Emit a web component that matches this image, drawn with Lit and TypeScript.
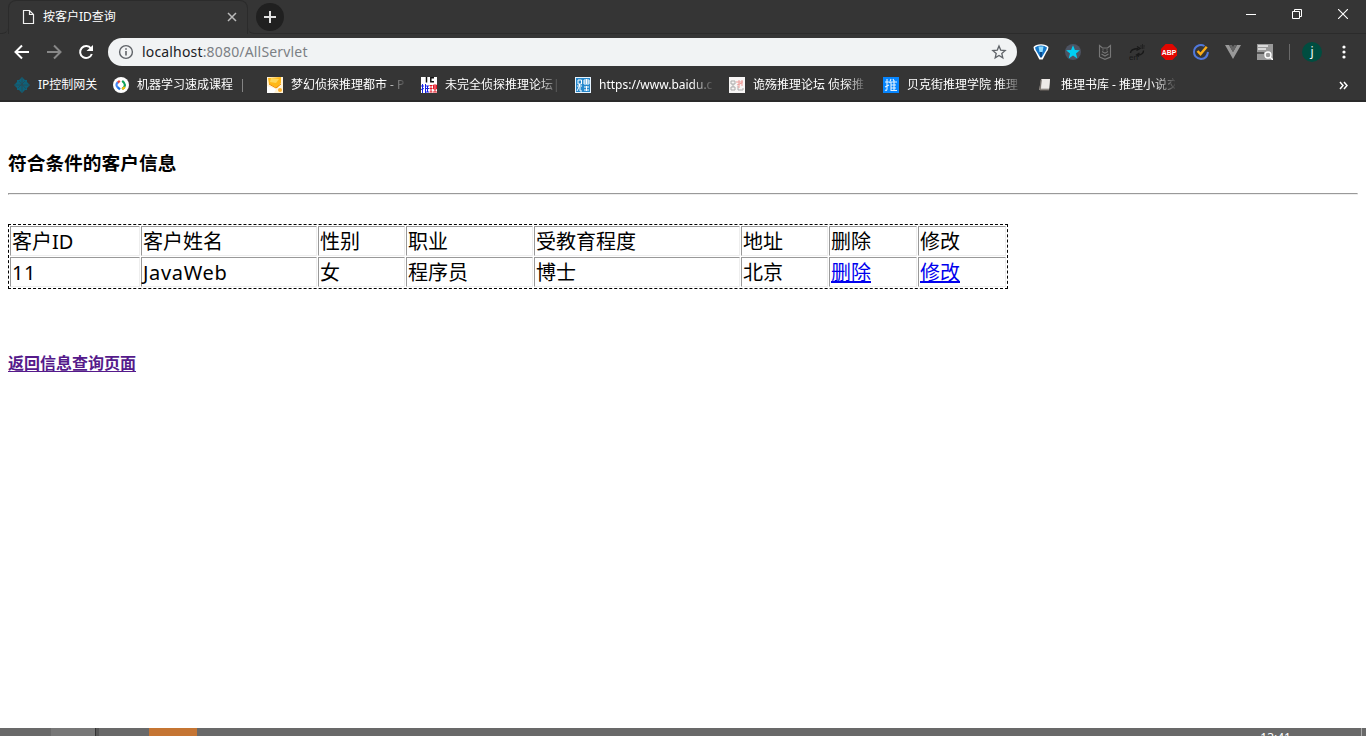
import { LitElement, html, css, svg } from "lit";
import { customElement, property } from "lit/decorators.js";

const base = css`
  :host {
    display: block;
    font-family: "Noto Sans", "Noto Sans CJK SC", sans-serif;
  }
  * { box-sizing: border-box; }
  svg { display: block; flex: none; }
`;

const glyph = (size: number, body: unknown) =>
  html`<svg width=${size} height=${size} viewBox="0 0 ${size} ${size}">${body}</svg>`;

const bookmarks = [
  {
    label: "IP控制网关", width: 83,
    icon: svg`<path d="M8 0l3 3h2v2l3 3-3 3v2h-2l-3 3-3-3H3v-2L0 8l3-3V3h2z" fill="#0d627b"/><path d="M8 1v14M1 8h14M5 4l7 8M4 11l7-7" stroke="#2b4953" stroke-width=".8"/>`,
  },
  {
    label: "机器学习速成课程  |  ", width: 138,
    icon: svg`<circle cx="8" cy="8" r="8" fill="#fff"/><g fill="none" stroke-width="2.2"><path d="M6.8 3.8L4.3 5.8" stroke="#ea4335"/><path d="M4.8 5.2Q2 8 5 10.8" stroke="#4285f4"/><path d="M4.8 10.4l2.2 2" stroke="#1a73e8"/><path d="M9.2 3.8Q14.7 8 9.2 12.2" stroke="#0fa15b"/><path d="M9.3 12.2l2.5-2" stroke="#fbbc05"/></g>`,
  },
  {
    label: "梦幻侦探推理都市 - P", width: 138,
    icon: svg`<path d="M0 0h16v16H0z" fill="#fff3d8"/><path d="M1 1l13-1v6l-4 5L2 7z" fill="#ffb817"/><path d="M2 7l7 4 5-4" fill="none" stroke="#f28a00"/><path d="M4 1l8 1-3 4-6-1z" fill="#ffd75b"/><circle cx="13" cy="13" r="2" fill="#ffb12a"/><path d="M0 9l9 3-2 4H0z" fill="#fff"/>`,
  },
  {
    label: "未完全侦探推理论坛|", width: 138,
    icon: svg`<path d="M0 0h16v16H0z" fill="#fff"/><path d="M5.5 0v5.5M13 .8H9.8v4H13" fill="none" stroke="#111" stroke-width="1.5"/><path d="M0 9h3M1.5 7v9M0 12.5l3-1M4.5 7v9M4.5 9h3.5M4.5 11.5H8M4.5 15H8M6.5 9v6" stroke="#1422e5" stroke-width="1"/><path d="M8.5 8.5h3M8.5 11.5h3M8.5 15h3M10 8v7M12.5 8h3v4h-3zM12.5 10h3M14 8v7M12 15h4" fill="none" stroke="#e21927" stroke-width="1"/>`,
  },
  {
    label: "https://www.baidu.c", width: 138,
    icon: svg`<path d="M0 0h16v16H0z" fill="#e7f4ff"/><path d="M1 1h14v14H1z" fill="#2688cc"/><path d="M3 3h3.5v4H3zM2 9h5M4.5 7v2L2 14M5 10v4h2M9 3h5v4H9zM9 5h5M11.5 2v5M9 10h5M9 13h5M11.5 9v5" fill="none" stroke="#fff"/>`,
  },
  {
    label: "诡殇推理论坛 侦探推", width: 138,
    icon: svg`<path d="M0 0h16v16H0z" fill="#f8f6f5"/><path d="M2 4h4v3H2zM2 10h4v3H2zM4 7v3M9 9v4h5v-2" fill="none" stroke="#aaa"/><path d="M7 5h7M10 3v8M8 8l5-2M13 3v6" stroke="#ed9b98"/>`,
  },
  {
    label: "贝克街推理学院 推理", width: 138,
    icon: svg`<path d="M0 0h16v16H0z" fill="#0786ff"/><path d="M2 5h4M4 2v10q0 2-2 1M2 10l4-2M8 2L6.5 6M8 5v9M8 5h6M8 8h5M8 11h5M8 13.5h6M11 3v10M10 2l1 2" fill="none" stroke="#e3f3ff" stroke-width="1.1"/>`,
  },
  {
    label: "推理书库 - 推理小说交", width: 138,
    icon: svg`<path d="M4 2h9l-1 11H2L4 3z" fill="#aaa5a0"/><path d="M5 2h8l-.8 9.6H4z" fill="#eeeae7"/><path d="M4 3l-1 10M3 13h9" stroke="#746d67" fill="none"/>`,
  },
];

const extensions = [
  svg`<path d="M.5 3Q3 .2 8 .2T15.500 3Q15.500 6 13.500 8L9.700 15.500H6.300L2.500 8Q.5 6 .5 3z" fill="#fff"/><path d="M2 3.500Q4.500 1.500 8 1.500t6 2Q13.500 6 12 8l-3 5H7L4 8Q2.500 6 2 3.500z" fill="#1577c9"/><path d="M5.500 2.500h5L9.500 8h-3z" fill="#8edcff"/><path d="M7.200 8h1.600v5.500H7.200z" fill="#083f7d"/>`,
  svg`<circle cx="8" cy="8" r="8" fill="#4c5362"/><path d="M8 1.200l1.900 4.700 5 .3L11 9.400l1.300 5L8 11.600l-4.300 2.800L5 9.400 1.100 6.200l5-.3z" fill="#00cff4"/>`,
  svg`<path d="M2.500 13V1.500l3 2.500h5l3-2.500V13L8 15.300 2.500 13M4.500 10L8 12l3.500-2M5 7.500l3 1.700 3-1.700M5.500 5.800h1M9.500 5.800h1" fill="none" stroke="#777" stroke-width="1.150"/>`,
  svg`<path d="M1.500 9Q1.500 5 9 4.500M8 2.500l3 2-3.500 2M14.500 6.500Q14.500 10.500 9 11M10.500 9l-3 2 2.500 1.500" fill="none" stroke="#191919" stroke-width="1.400"/><path d="M11 2h5M13.500 0v5M11.500 4h4" stroke="#222"/><text x="0" y="15.500" font-size="8" fill="#171717" font-family="Liberation Sans, sans-serif">en</text>`,
  svg`<path d="M4.700 0h6.600L16 4.700v6.600L11.300 16H4.700L0 11.300V4.700z" fill="#e10600"/><text x="8" y="11" font-size="8" font-weight="bold" text-anchor="middle" textLength="14.400" lengthAdjust="spacingAndGlyphs" fill="#fff" font-family="Liberation Sans, sans-serif">ABP</text>`,
  svg`<path d="M11.500 2Q9 .6 6 1.300Q1 3 1 8q0 6 7 7 6 0 7-7" fill="none" stroke="#5078dc" stroke-width="2"/><path d="M4.500 7l3 3.200 6.200-7.400" fill="none" stroke="#fbae17" stroke-width="2.500"/>`,
  svg`<path d="M0 1h4l4 7 4-7h4L8 15z" fill="#999"/><path d="M4 1h3l1 2 1-2h3L8 8z" fill="#666"/>`,
  svg`<path d="M0 0h16v16H0z" fill="#999"/><path d="M1 2h10M1 5h8" stroke="#eee" stroke-width="1.500"/><path d="M0 8h7v2H0z" fill="#555"/><circle cx="11" cy="11" r="3" fill="#999" stroke="#fff" stroke-width="1.400"/><path d="M13 13l3 3" stroke="#fff" stroke-width="1.500"/>`,
];

@customElement("browser-tabs")
class BrowserTabs extends LitElement {
  static styles = [base, css`
    .strip { display: flex; height: 34px; background: #353535; color: #fff; }
    .edge { width: 8px; border-bottom: 1px solid #2b2b2b; border-radius: 0 0 6px 0; }
    .tab { display: flex; align-items: center; width: 240px; height: 34px; padding: 0 10px 2px 11px; border: 1px solid #2b2b2b; border-bottom: 0; border-radius: 8px 8px 0 0; }
    .title { margin-left: 7px; flex: 1; font-size: 12px; line-height: 18px; white-space: nowrap; }
    .rest { flex: 1; display: flex; border-bottom: 1px solid #2b2b2b; border-radius: 0 0 0 6px; }
    .add { width: 28px; height: 28px; margin: 3px 0 0 8px; border-radius: 50%; background: #202020; display: grid; place-items: center; }
    .controls { margin-left: auto; display: flex; }
    .control { width: 46px; height: 28px; display: grid; place-items: center; }
  `];
  render() {
    return html`<div class="strip">
      <div class="edge"></div>
      <div class="tab">
        ${glyph(16, svg`<path d="M3.500 1.500h6l4 4v9h-10zM9.500 1.500v4h4" fill="none" stroke="#f2f2f2" stroke-width="1.200"/>`)}
        <div class="title">按客户ID查询</div>
        ${glyph(10, svg`<path d="M1 1l8 8M9 1L1 9" stroke="#bbb" stroke-width="1.500"/>`)}
      </div>
      <div class="rest">
        <div class="add">${glyph(12, svg`<path d="M6 0v12M0 6h12" stroke="#e1e1e1" stroke-width="2"/>`)}</div>
        <div class="controls">
          <div class="control">${glyph(10, svg`<path d="M0 5.500h10" stroke="#fff"/>`)}</div>
          <div class="control">${glyph(10, svg`<path d="M.5 2.500h7v7h-7zM2.500 2.500v-2h7v7h-2" fill="none" stroke="#fff"/>`)}</div>
          <div class="control">${glyph(10, svg`<path d="M0 0l10 10M10 0L0 10" stroke="#fff" stroke-width="1.100"/>`)}</div>
        </div>
      </div>
    </div>`;
  }
}

@customElement("browser-toolbar")
class BrowserToolbar extends LitElement {
  static styles = [base, css`
    .bar { display: flex; align-items: center; height: 36px; padding-left: 14px; background: #353535; }
    .nav { display: flex; gap: 16px; }
    .address { display: flex; align-items: center; width: 909px; height: 28px; margin-left: 14px; padding: 0 10px; border-radius: 14px; background: #f1f3f4; }
    .url { flex: 1; margin-left: 8px; font-size: 14px; line-height: 20px; letter-spacing: 0.17px; color: #7b8084; white-space: nowrap; }
    .host { color: #202124; }
    .extensions { display: flex; gap: 16px; margin-left: 16px; }
    .divider { width: 1px; height: 16px; margin-left: 16px; background: #696969; }
    .avatar { width: 20px; height: 20px; margin-left: 12px; border-radius: 50%; background: #004d40; color: #fff; font-size: 12px; line-height: 19px; text-align: center; }
    .menu { margin-left: 14px; }
  `];
  render() {
    return html`<div class="bar">
      <div class="nav">
        ${glyph(16, svg`<path d="M15 8H2M8 1.500L1.500 8 8 14.500" fill="none" stroke="#fff" stroke-width="2"/>`)}
        ${glyph(16, svg`<path d="M1 8h13M8 1.500L14.500 8 8 14.500" fill="none" stroke="#888" stroke-width="2"/>`)}
        ${glyph(16, svg`<path d="M13 4.500A6 6 0 1 0 13.800 10" fill="none" stroke="#fff" stroke-width="2"/><path d="M8.500 7H15V1z" fill="#fff"/>`)}
      </div>
      <div class="address">
        ${glyph(16, svg`<circle cx="8" cy="8" r="6.400" fill="none" stroke="#5f6368" stroke-width="1.400"/><path d="M8 7v4.500M8 4.200v1.600" stroke="#5f6368" stroke-width="1.600"/>`)}
        <div class="url"><span class="host">localhost</span>:8080/AllServlet</div>
        ${glyph(16, svg`<path d="M8 2l1.700 4.100 4.500.4-3.400 3 1 4.300L8 11.500l-3.800 2.300 1-4.300-3.400-3 4.500-.4z" fill="none" stroke="#5f6368" stroke-width="1.300"/>`)}
      </div>
      <div class="extensions">${extensions.map((e) => glyph(16, e))}</div>
      <div class="divider"></div>
      <div class="avatar">j</div>
      <div class="menu">${glyph(16, svg`<circle cx="8" cy="3" r="1.600" fill="#fff"/><circle cx="8" cy="8" r="1.600" fill="#fff"/><circle cx="8" cy="13" r="1.600" fill="#fff"/>`)}</div>
    </div>`;
  }
}

@customElement("bookmark-bar")
class BookmarkBar extends LitElement {
  static styles = [base, css`
    .bar { display: flex; align-items: center; gap: 16px; height: 32px; padding: 0 18px 0 14px; background: #353535; border-bottom: 2px solid #2a2a2a; color: #fff; }
    .item { display: flex; align-items: center; gap: 8px; flex: none; height: 28px; padding-bottom: 1px; }
    .label { flex: 1; min-width: 0; font-size: 12px; line-height: 18px; white-space: pre; }
    .fade { -webkit-mask-image: linear-gradient(90deg, #000 92px, transparent 116px); mask-image: linear-gradient(90deg, #000 92px, transparent 116px); }
    .more { margin-left: auto; }
  `];
  render() {
    return html`<div class="bar">
      ${bookmarks.map((b) => html`<div class="item" style="width:${b.width}px">
        ${glyph(16, b.icon)}<div class="label ${b.width > 100 ? "fade" : ""}">${b.label}</div>
      </div>`)}
      <div class="more">${glyph(9, svg`<path d="M1 1l3 3.500L1 8M5 1l3 3.500L5 8" fill="none" stroke="#fff" stroke-width="1.500"/>`)}</div>
    </div>`;
  }
}

@customElement("customer-table")
class CustomerTable extends LitElement {
  @property({ attribute: false }) rows: string[][] = [];
  static styles = [base, css`
    .table { display: grid; grid-template-columns: 130px 176px 87px 127px 206px 87px 88px 88px; grid-auto-rows: 30px; gap: 1px; width: 1000px; padding: 1px; border: 1px dashed #000; }
    .cell { padding: 1px 1px 0; border: 1px solid; border-color: #999 #eee #eee #999; font-size: 20px; line-height: 28px; white-space: nowrap; }
    .latin { letter-spacing: 0.65px; }
    .link { color: #00e; text-decoration: underline; text-underline-offset: 1px; text-decoration-thickness: 2px; }
  `];
  render() {
    return html`<div class="table">${this.rows.map((row, r) => row.map((text, c) => html`<div class="cell ${/^\w+$/.test(text) ? "latin" : ""}">
      ${r > 0 && c > 5 ? html`<a class="link" href="#">${text}</a>` : text}</div>`))}</div>`;
  }
}

@customElement("app-root")
class AppRoot extends LitElement {
  static styles = [base, css`
    :host { height: 736px; background: #fff; overflow: hidden; }
    .window { display: flex; flex-direction: column; height: 736px; }
    .page { flex: 1; padding: 48px 8px 0; color: #000; }
    .heading { margin: 0; font-size: 18.72px; line-height: 26px; font-weight: 700; }
    .rule { height: 2px; margin: 17px 0 29px; border: 1px solid; border-color: #999 #eee #eee #999; }
    .back { display: inline-block; margin-top: 62px; font-size: 16px; line-height: 24px; font-weight: 700; color: #551a8b; text-underline-offset: 2px; text-decoration-thickness: 1px; }
    .taskbar { display: flex; height: 8px; overflow: hidden; background: #696969; }
    .start { width: 51px; }
    .search { width: 44px; background: #777; }
    .split { width: 4px; background: #555; border-left: 1px solid #333; }
    .idle { width: 50px; }
    .active { width: 48px; background: #c57533; }
    .clock { margin-left: auto; margin-right: 70px; padding-top: 4px; font-size: 12px; line-height: 12px; color: #fff; }
    .desktop { width: 5px; border-left: 1px solid #aaa; }
  `];
  render() {
    const rows = [
      ["客户ID", "客户姓名", "性别", "职业", "受教育程度", "地址", "删除", "修改"],
      ["11", "JavaWeb", "女", "程序员", "博士", "北京", "删除", "修改"],
    ];
    return html`<div class="window">
      <browser-tabs></browser-tabs>
      <browser-toolbar></browser-toolbar>
      <bookmark-bar></bookmark-bar>
      <main class="page">
        <h3 class="heading">符合条件的客户信息</h3>
        <div class="rule"></div>
        <customer-table .rows=${rows}></customer-table>
        <a class="back" href="#">返回信息查询页面</a>
      </main>
      <footer class="taskbar">
        <div class="start"></div><div class="search"></div><div class="split"></div><div class="idle"></div><div class="active"></div>
        <div class="clock">13:41</div><div class="desktop"></div>
      </footer>
    </div>`;
  }
}
